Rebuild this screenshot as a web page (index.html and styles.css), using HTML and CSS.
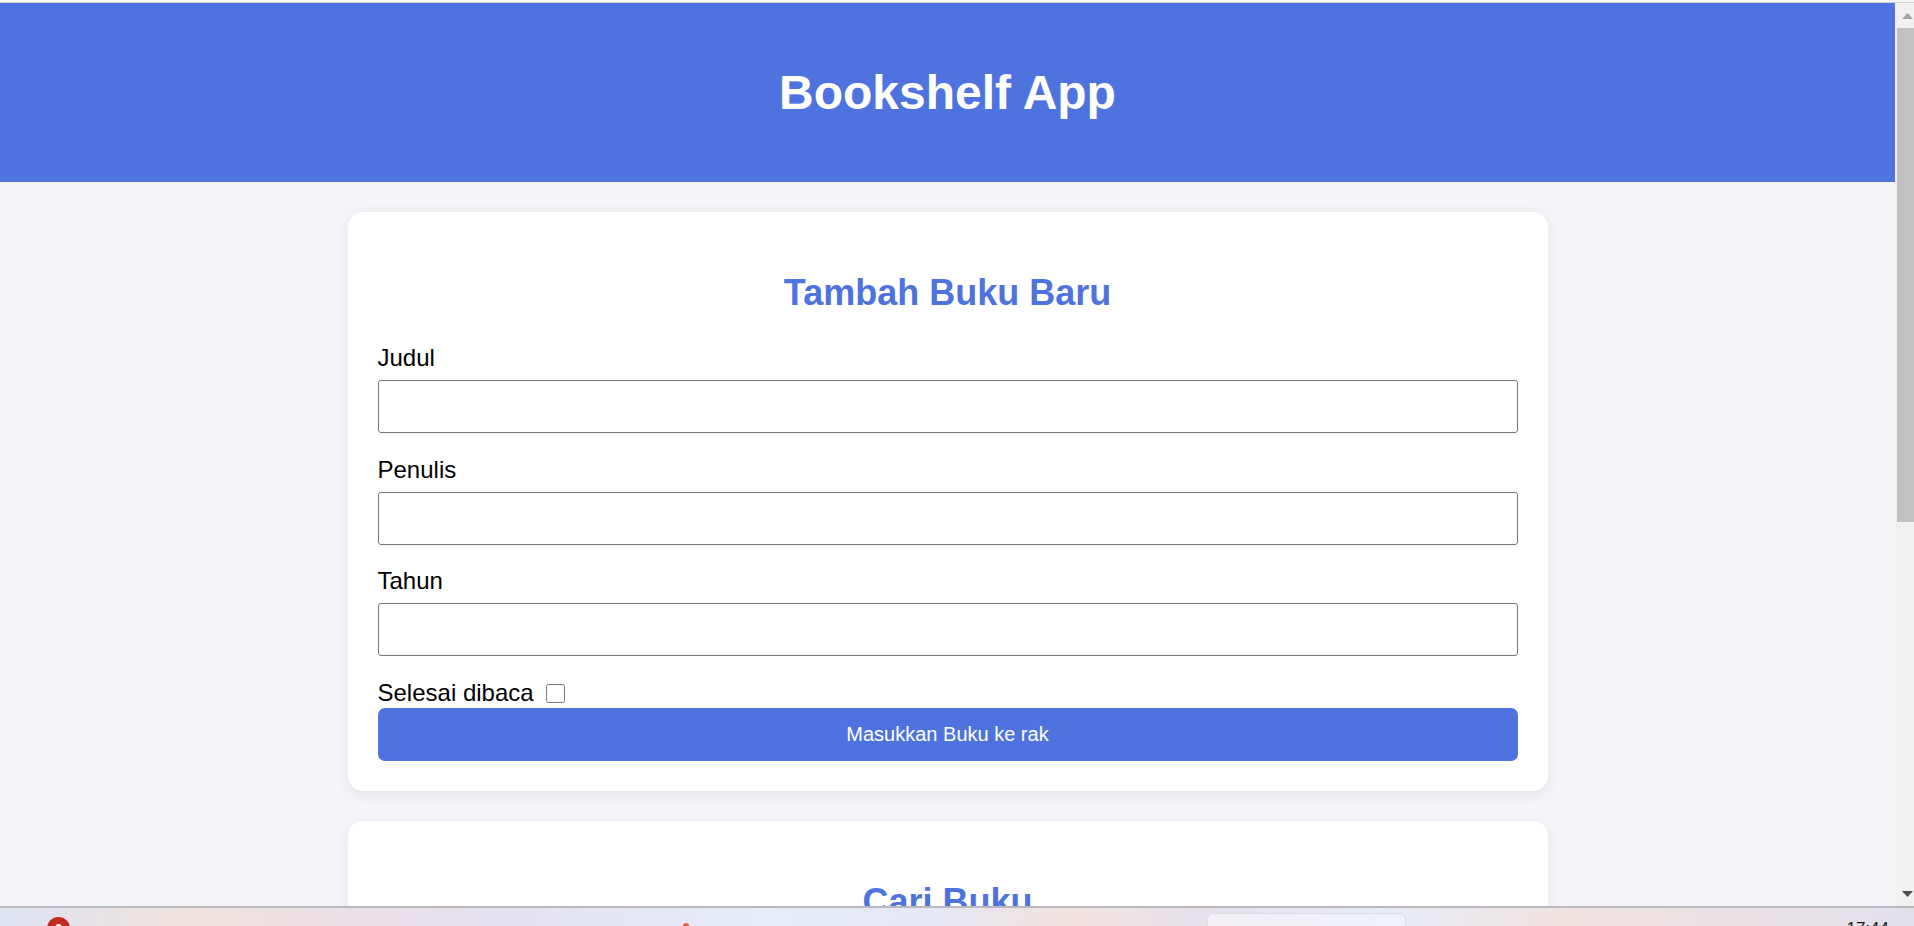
FILE: index.html
```html
<!DOCTYPE html>
<html>
<head>
  <meta charset="utf-8">
  <title>Bookshelf App</title>
  <link rel="stylesheet" href="styles.css">
</head>
<body>
  <div class="screen">
    <div class="window">
      <header class="app-header">
        <h1>Bookshelf App</h1>
      </header>
      <main class="content">
        <!-- Form tambah buku -->
        <section class="card">
          <h2>Tambah Buku Baru</h2>
          <form id="bookForm">
            <div class="form-group">
              <label for="bookFormTitle">Judul</label>
              <input id="bookFormTitle" type="text" required>
            </div>
            <div class="form-group">
              <label for="bookFormAuthor">Penulis</label>
              <input id="bookFormAuthor" type="text" required>
            </div>
            <div class="form-group">
              <label for="bookFormYear">Tahun</label>
              <input id="bookFormYear" type="number" required>
            </div>
            <div class="check-row">
              <label for="bookFormIsComplete">Selesai dibaca</label>
              <input id="bookFormIsComplete" type="checkbox">
            </div>
            <button id="bookFormSubmit" type="submit">Masukkan Buku ke rak</button>
          </form>
        </section>
        <!-- Form cari buku -->
        <section class="card">
          <h2>Cari Buku</h2>
          <form id="searchBook">
            <div class="form-group">
              <label for="searchBookTitle">Judul</label>
              <input id="searchBookTitle" type="text">
            </div>
            <button id="searchSubmit" type="submit">Cari</button>
          </form>
        </section>
        <!-- Rak buku -->
        <section class="card">
          <h2>Belum selesai dibaca</h2>
          <div id="incompleteBookList"></div>
        </section>
        <section class="card">
          <h2>Selesai dibaca</h2>
          <div id="completeBookList"></div>
        </section>
      </main>
    </div>
    <!-- Scrollbar -->
    <div class="scrollbar">
      <div class="sb-button">
        <svg width="11" height="6" viewBox="0 0 11 6"><path d="M0 6L5.5 0L11 6Z" fill="#a3a3a3"/></svg>
      </div>
      <div class="sb-track">
        <div class="sb-thumb"></div>
      </div>
      <div class="sb-button">
        <svg width="11" height="6" viewBox="0 0 11 6"><path d="M0 0L11 0L5.5 6Z" fill="#505050"/></svg>
      </div>
    </div>
  </div>
  <div class="taskbar">
    <span class="tb-badge">2</span>
    <span class="tb-dot"></span>
    <span class="tb-window"></span>
    <span class="tb-clock">17:44</span>
  </div>
</body>
</html>
```

FILE: styles.css
```css
/*Page*/
html, body {
  height: 100%;
}
body {
  margin: 0;
  padding-top: 2px;
  box-sizing: border-box;
  display: flex;
  flex-direction: column;
  overflow: hidden;
  background-color: #f7f7f7;
  font-family: "Liberation Sans", Arial, sans-serif;
}
/*Browser area: page + scrollbar*/
.screen {
  flex: 1;
  min-height: 0;
  display: flex;
  border-top: 1px solid #d2d2d2;
}
.window {
  flex: 1;
  overflow: hidden;
  background-color: #f4f5f9;
}
.scrollbar {
  flex: none;
  width: 19px;
  display: flex;
  flex-direction: column;
  background-color: #f1f1f1;
}
.sb-button {
  height: 25px;
  display: flex;
  align-items: center;
  padding-left: 7px;
}
.sb-button svg {
  display: block;
}
.sb-track {
  flex: 1;
  padding-left: 2px;
}
.sb-thumb {
  height: 494px;
  background-color: #c1c1c1;
}
/*Header*/
.app-header {
  padding: 30px;
  background-color: #4e73df;
  color: white;
  text-align: center;
}
.app-header h1 {
  margin: 32px 0;
  font-size: 48px;
}
/*Cards*/
.content {
  padding: 30px 0;
}
.card {
  max-width: 1200px;
  margin: 0 auto 30px;
  padding: 30px;
  box-sizing: border-box;
  background-color: white;
  border-radius: 15px;
  box-shadow: 0 3px 15px rgba(0, 0, 0, 0.08);
}
.card:last-child {
  margin-bottom: 0;
}
.card h2 {
  margin: 30px 0;
  font-size: 36px;
  color: #4e73df;
  text-align: center;
}
/*Form*/
.form-group {
  margin-bottom: 22.5px;
}
.form-group label {
  display: block;
  margin-bottom: 8px;
  font-size: 24px;
}
.form-group input {
  width: 100%;
  height: 53px;
  padding: 0 15px;
  box-sizing: border-box;
  font-size: 20px;
  font-family: inherit;
  border: 1px solid #767676;
  border-radius: 3px;
}
.check-row {
  display: flex;
  align-items: center;
  height: 29px;
  font-size: 24px;
}
.check-row input {
  width: 19px;
  height: 19px;
  margin: 0 0 0 12px;
}
.card button {
  width: 100%;
  height: 53px;
  background-color: #4e73df;
  color: white;
  border: none;
  border-radius: 7px;
  font-size: 20px;
  font-family: inherit;
  cursor: pointer;
}
/*Taskbar*/
.taskbar {
  flex: none;
  display: flex;
  align-items: flex-start;
  height: 18px;
  overflow: hidden;
  border-top: 2px solid #bab8be;
  background: linear-gradient(to right, #dde4f3 0%, #f1e2dc 10%, #e9dfe9 20%, #e3e4f3 30%, #e6ecf8 40%, #e5e8f6 48%, #f2e2de 56%, #e5e1ee 64%, #e6ecf8 72%, #f1e2df 82%, #e3e0ec 100%);
}
.tb-badge {
  flex: none;
  width: 23px;
  height: 23px;
  margin: 9px 0 0 47px;
  border-radius: 50%;
  background-color: #c42b1c;
  color: white;
  font-size: 13px;
  font-weight: bold;
  line-height: 23px;
  text-align: center;
}
.tb-dot {
  flex: none;
  width: 6px;
  height: 6px;
  margin: 15px 0 0 613px;
  border-radius: 50%;
  background-color: #e8613c;
}
.tb-window {
  flex: none;
  width: 197px;
  height: 20px;
  margin: 5px 0 0 518px;
  border: 1px solid #dcdbe6;
  border-radius: 6px;
  background: linear-gradient(to right, #f3eff4, #eef2fb);
}
.tb-clock {
  margin: 11px 25px 0 auto;
  font-size: 17px;
  color: #1a1a1a;
}
```
